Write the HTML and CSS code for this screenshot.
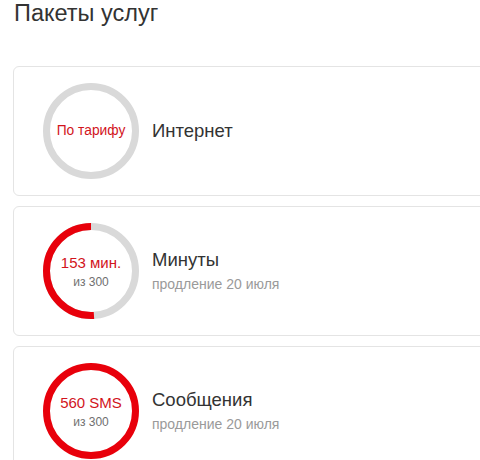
FILE: index.html
```html
<!DOCTYPE html>
<html lang="ru">
<head>
  <meta charset="UTF-8" />
  <title>Пакеты услуг</title>
  <link rel="stylesheet" href="styles.css">
</head>
<body>
  <h1>Пакеты услуг</h1>

  <div class="packages">
    <div class="package">
      <div class="ring">
        <svg viewBox="0 0 96 96" width="96" height="96">
          <circle class="ring-bg" cx="48" cy="48" r="44.5" />
        </svg>
        <div class="ring-text">
          <span class="ring-value small">По тарифу</span>
        </div>
      </div>
      <div class="package-info">
        <div class="package-title">Интернет</div>
      </div>
    </div>

    <div class="package">
      <div class="ring">
        <svg viewBox="0 0 96 96" width="96" height="96">
          <circle class="ring-bg" cx="48" cy="48" r="44.5" />
          <circle class="ring-fill" cx="48" cy="48" r="44.5"
                  stroke-dasharray="142.6 279.6"
                  transform="translate(96 0) scale(-1 1) rotate(-90 48 48)" />
        </svg>
        <div class="ring-text">
          <span class="ring-value">153 мин.</span>
          <span class="ring-total">из 300</span>
        </div>
      </div>
      <div class="package-info">
        <div class="package-title">Минуты</div>
        <div class="package-sub">продление 20 июля</div>
      </div>
    </div>

    <div class="package">
      <div class="ring">
        <svg viewBox="0 0 96 96" width="96" height="96">
          <circle class="ring-fill" cx="48" cy="48" r="44.5" />
        </svg>
        <div class="ring-text">
          <span class="ring-value">560 SMS</span>
          <span class="ring-total">из 300</span>
        </div>
      </div>
      <div class="package-info">
        <div class="package-title">Сообщения</div>
        <div class="package-sub">продление 20 июля</div>
      </div>
    </div>
  </div>
</body>
</html>
```

FILE: styles.css
```css
body {
  font-family: 'Liberation Sans', Arial, sans-serif;
  background: #fff;
  color: #333;
  margin: 0;
  padding: 2px 0 0 14px;
  overflow: hidden;
}

h1 {
  margin: 0 0 41px;
  font-size: 23.5px;
  line-height: 23px;
  font-weight: normal;
  color: #333;
}

.packages {
  display: flex;
  flex-direction: column;
  gap: 10px;
  margin-left: -1px;
  width: 540px;
}

.package {
  display: flex;
  align-items: center;
  gap: 13px;
  height: 128px;
  padding-left: 29px;
  border: 1px solid #e4e4e4;
  border-radius: 6px;
  background: #fff;
}

.ring {
  position: relative;
  width: 96px;
  height: 96px;
  flex-shrink: 0;
}

.ring svg {
  display: block;
}

.ring-bg,
.ring-fill {
  fill: none;
  stroke-width: 7;
}

.ring-bg {
  stroke: #d9d9d9;
}

.ring-fill {
  stroke: #e8000b;
}

.ring-text {
  position: absolute;
  inset: 0;
  display: flex;
  flex-direction: column;
  align-items: center;
  justify-content: center;
}

.ring-value {
  color: #d2141c;
  font-size: 15px;
  line-height: 18px;
}

.ring-value.small {
  font-size: 13.8px;
}

.ring-total {
  color: #6f6f6f;
  font-size: 12px;
  line-height: 14px;
  margin-top: 3px;
}

.package-title {
  font-size: 18.5px;
  line-height: 22px;
  color: #333;
}

.package-sub {
  font-size: 14px;
  line-height: 18px;
  margin-top: 4px;
  color: #9a9a9a;
}
```
